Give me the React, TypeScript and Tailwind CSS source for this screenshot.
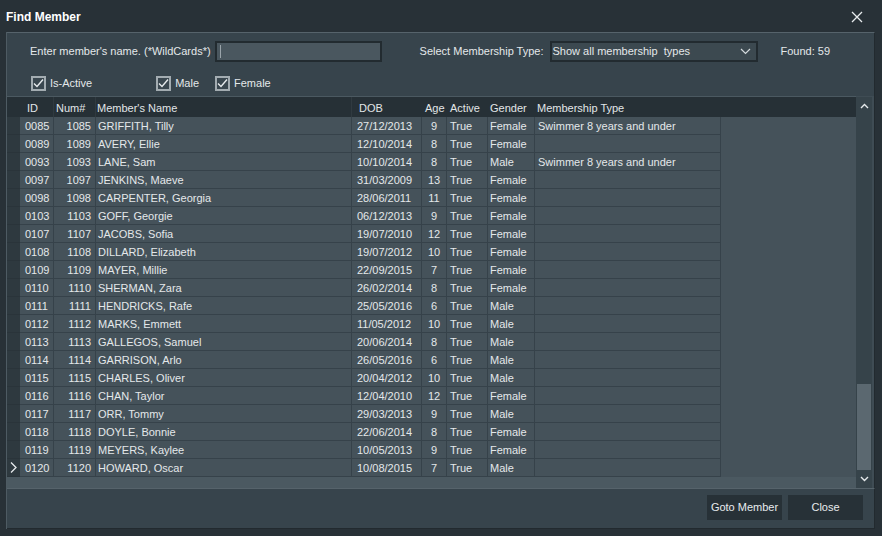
import React from 'react';

type Member = {
  id: string;
  num: string;
  name: string;
  dob: string;
  age: number;
  gender: string;
  type?: string;
};

const members: Member[] = [
  { id: '0085', num: '1085', name: 'GRIFFITH, Tilly', dob: '27/12/2013', age: 9, gender: 'Female', type: 'Swimmer 8 years and under' },
  { id: '0089', num: '1089', name: 'AVERY, Ellie', dob: '12/10/2014', age: 8, gender: 'Female' },
  { id: '0093', num: '1093', name: 'LANE, Sam', dob: '10/10/2014', age: 8, gender: 'Male', type: 'Swimmer 8 years and under' },
  { id: '0097', num: '1097', name: 'JENKINS, Maeve', dob: '31/03/2009', age: 13, gender: 'Female' },
  { id: '0098', num: '1098', name: 'CARPENTER, Georgia', dob: '28/06/2011', age: 11, gender: 'Female' },
  { id: '0103', num: '1103', name: 'GOFF, Georgie', dob: '06/12/2013', age: 9, gender: 'Female' },
  { id: '0107', num: '1107', name: 'JACOBS, Sofia', dob: '19/07/2010', age: 12, gender: 'Female' },
  { id: '0108', num: '1108', name: 'DILLARD, Elizabeth', dob: '19/07/2012', age: 10, gender: 'Female' },
  { id: '0109', num: '1109', name: 'MAYER, Millie', dob: '22/09/2015', age: 7, gender: 'Female' },
  { id: '0110', num: '1110', name: 'SHERMAN, Zara', dob: '26/02/2014', age: 8, gender: 'Female' },
  { id: '0111', num: '1111', name: 'HENDRICKS, Rafe', dob: '25/05/2016', age: 6, gender: 'Male' },
  { id: '0112', num: '1112', name: 'MARKS, Emmett', dob: '11/05/2012', age: 10, gender: 'Male' },
  { id: '0113', num: '1113', name: 'GALLEGOS, Samuel', dob: '20/06/2014', age: 8, gender: 'Male' },
  { id: '0114', num: '1114', name: 'GARRISON, Arlo', dob: '26/05/2016', age: 6, gender: 'Male' },
  { id: '0115', num: '1115', name: 'CHARLES, Oliver', dob: '20/04/2012', age: 10, gender: 'Male' },
  { id: '0116', num: '1116', name: 'CHAN, Taylor', dob: '12/04/2010', age: 12, gender: 'Female' },
  { id: '0117', num: '1117', name: 'ORR, Tommy', dob: '29/03/2013', age: 9, gender: 'Male' },
  { id: '0118', num: '1118', name: 'DOYLE, Bonnie', dob: '22/06/2014', age: 8, gender: 'Female' },
  { id: '0119', num: '1119', name: 'MEYERS, Kaylee', dob: '10/05/2013', age: 9, gender: 'Female' },
  { id: '0120', num: '1120', name: 'HOWARD, Oscar', dob: '10/08/2015', age: 7, gender: 'Male' },
];

const cols = 'grid grid-cols-[13px_34px_42px_256px_70px_25px_41px_47px_186px]';

const Check = ({ label }: { label: string }) => (
  <div className="flex items-center gap-[4px]">
    <div className="w-[15px] h-[15px] border-2 border-[#a3acb1] bg-[#3a474f] flex items-center justify-center">
      <svg width="11" height="11" viewBox="0 0 11 11">
        <path d="M1 5.5 L4 8.5 L10 1.5" fill="none" stroke="#e6eaec" strokeWidth="1.4" />
      </svg>
    </div>
    <span>{label}</span>
  </div>
);

const Cell = ({ children, className = '' }: { children?: React.ReactNode; className?: string }) => (
  <div className={`border-r border-b border-[#36424a] h-[18px] leading-[18px] whitespace-nowrap overflow-hidden ${className}`}>
    {children}
  </div>
);

const App: React.FC = () => {
  return (
    <div
      className="w-[882px] h-[536px] bg-[#283137] flex flex-col text-[11px] text-[#e4e8ea] overflow-hidden"
      style={{ fontFamily: '"Liberation Sans", Arial, sans-serif' }}
    >
      {/* Title bar */}
      <div className="h-[32px] flex items-center justify-between pl-[6px] pr-[19px] pt-[2px] shrink-0">
        <span className="text-[12px] font-bold text-white">Find Member</span>
        <svg width="12" height="12" viewBox="0 0 12 12">
          <path d="M1 1 L11 11 M11 1 L1 11" stroke="#e8ecee" strokeWidth="1.3" />
        </svg>
      </div>

      <div className="flex-1 flex flex-col ml-[6px] mr-[7px] mb-[7px] border-l border-[#4e5b63]">
        {/* Filter panel */}
        <div className="h-[64px] shrink-0 bg-[#37444c] border-t border-[#56636b] border-r border-r-[#222a2f] flex flex-col pl-[23px]">
          <div className="flex items-center h-[20px] mt-[8px]">
            <span>Enter member's name. (*WildCards*)</span>
            <div className="ml-[4px] w-[167px] h-[21px] bg-[#4a575f] border-2 border-[#222b30] flex items-center pl-[3px]">
              <div className="w-px h-[13px] bg-[#9aa4aa]" />
            </div>
            <span className="ml-[38px]">Select Membership Type:</span>
            <div className="ml-[6px] w-[208px] h-[21px] bg-[#3c4950] border-2 border-[#222b30] flex items-center justify-between pl-[1px] pr-[5px]">
              <span>Show all membership&nbsp; types</span>
              <svg width="11" height="7" viewBox="0 0 11 7">
                <path d="M1 1 L5.5 5.5 L10 1" fill="none" stroke="#d4dadd" strokeWidth="1.2" />
              </svg>
            </div>
            <span className="ml-[23px]">Found: 59</span>
          </div>
          <div className="flex items-center mt-[14px] h-[16px] pl-[1px]">
            <Check label="Is-Active" />
            <div className="ml-[64px]">
              <Check label="Male" />
            </div>
            <div className="ml-[16px]">
              <Check label="Female" />
            </div>
          </div>
        </div>

        {/* Grid */}
        <div className="h-[392px] shrink-0 flex bg-[#3f4c54] pr-[2px] border-r border-[#222a2f]">
          <div className="flex-1 bg-[#4b5961] flex flex-col">
            <div className={`${cols} h-[20px] bg-[#263036] text-[#e2e6e8] mt-[1px]`}>
              <div className="bg-[#263036]" />
              <div className="pl-[7px] leading-[22px] border-r border-[#303a40]">ID</div>
              <div className="pl-[2px] leading-[22px] border-r border-[#303a40]">Num#</div>
              <div className="pl-[1px] leading-[22px] border-r border-[#303a40]">Member's Name</div>
              <div className="pl-[7px] leading-[22px]">DOB</div>
              <div className="pl-[3px] leading-[22px]">Age</div>
              <div className="pl-[3px] leading-[22px]">Active</div>
              <div className="pl-[2px] leading-[22px]">Gender</div>
              <div className="pl-[2px] leading-[22px]">Membership Type</div>
            </div>
            {members.map((m, i) => (
              <div key={m.id} className={`${cols} bg-[#45525a]`}>
                <div className="h-[18px] bg-[#2e393f] border-b border-[#2a343a] flex items-center justify-center">
                  {i === members.length - 1 && (
                    <svg width="7" height="11" viewBox="0 0 7 11">
                      <path d="M1 0.5 L6 5.5 L1 10.5" fill="none" stroke="#e6eaec" strokeWidth="1.3" />
                    </svg>
                  )}
                </div>
                <Cell className="pl-[5px]">{m.id}</Cell>
                <Cell className="text-right pr-[4px]">{m.num}</Cell>
                <Cell className="pl-[2px]">{m.name}</Cell>
                <Cell className="pl-[5px]">{m.dob}</Cell>
                <Cell className="text-center">{m.age}</Cell>
                <Cell className="pl-[3px]">True</Cell>
                <Cell className="pl-[2px]">{m.gender}</Cell>
                <Cell className="pl-[3px]">{m.type}</Cell>
              </div>
            ))}
          </div>
          {/* Scrollbar */}
          <div className="w-[16px] bg-[#36434a] flex flex-col items-center mt-[1px]">
            <div className="h-[18px] w-full flex items-center justify-center">
              <svg width="9" height="6" viewBox="0 0 9 6">
                <path d="M1 5 L4.5 1.5 L8 5" fill="none" stroke="#e6eaec" strokeWidth="1.4" />
              </svg>
            </div>
            <div className="flex-1" />
            <div className="w-[14px] h-[86px] bg-[#5b6870]" />
            <div className="h-[18px] w-full flex items-center justify-center">
              <svg width="9" height="6" viewBox="0 0 9 6">
                <path d="M1 1 L4.5 4.5 L8 1" fill="none" stroke="#e6eaec" strokeWidth="1.4" />
              </svg>
            </div>
          </div>
        </div>

        {/* Bottom panel */}
        <div className="flex-1 bg-[#37444c] border-t border-[#56636b] border-r border-r-[#222a2f] border-b border-b-[#222a2f] flex items-start justify-end pt-[6px] pr-[11px] gap-[6px]">
          <button className="w-[75px] h-[25px] bg-[#273137] text-[#e8ecee]">Goto Member</button>
          <button className="w-[75px] h-[25px] bg-[#273137] text-[#e8ecee]">Close</button>
        </div>
      </div>
    </div>
  );
};

export default App;
